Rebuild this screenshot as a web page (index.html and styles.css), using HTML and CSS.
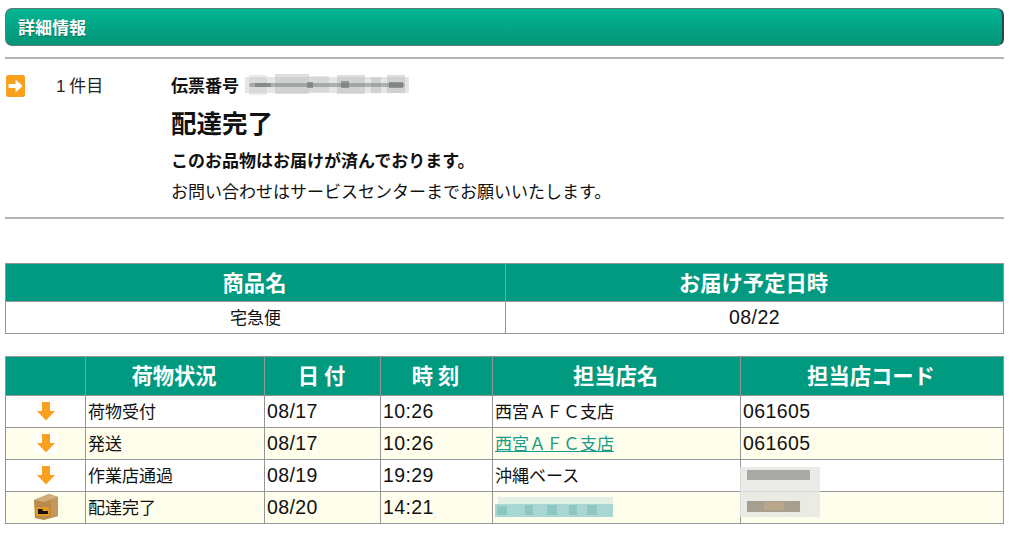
FILE: index.html
```html
<!DOCTYPE html>
<html lang="ja">
<head>
<meta charset="utf-8">
<title>詳細情報</title>
<link rel="stylesheet" href="styles.css">
</head>
<body>
<h1 class="bar">詳細情報</h1>
<hr class="rule rule-top">
<section class="summary">
  <svg class="go" width="19" height="22" viewBox="0 0 19 22"><rect width="19" height="22" rx="2.500" fill="#fa9f1e"/><path d="M2.500 9h7V4.500l7 6.500-7 6.500V13h-7z" fill="#fff"/></svg>
  <div class="count"><span class="one">1</span> 件目</div>
  <div class="detail">
    <div class="slip"><b>伝票番号</b>
      <svg class="mosaic" width="164" height="26" viewBox="0 0 164 26">
        <g fill="#bcbebc"><rect x="0" y="5" width="164" height="16" opacity=".4"/><rect x="4" y="3" width="18" height="20" opacity=".3"/><rect x="30" y="2" width="34" height="20" opacity=".5"/><rect x="64" y="4" width="20" height="16" opacity=".35"/><rect x="92" y="3" width="28" height="19" opacity=".5"/><rect x="126" y="5" width="10" height="16" opacity=".5"/><rect x="142" y="3" width="18" height="18" opacity=".5"/></g>
        <g fill="#6b7070"><rect x="4" y="11" width="156" height="4" rx="2" opacity=".45"/><rect x="10" y="11" width="16" height="4" opacity=".55"/><rect x="62" y="10" width="6" height="6" opacity=".6"/><rect x="96" y="9" width="8" height="7" opacity=".6"/><rect x="144" y="10" width="14" height="6" opacity=".6"/></g>
      </svg>
    </div>
    <h2 class="status">配達完了</h2>
    <p class="lead">このお品物はお届けが済んでおります。</p>
    <p class="note">お問い合わせはサービスセンターまでお願いいたします。</p>
  </div>
</section>
<hr class="rule rule-mid">

<table class="grid goods">
  <colgroup><col class="g1"><col></colgroup>
  <tr><th>商品名</th><th>お届け予定日時</th></tr>
  <tr class="row"><td class="c">宅急便</td><td class="c num">08/22</td></tr>
</table>

<div class="track-wrap">
<table class="grid track">
  <colgroup><col class="t1"><col class="t2"><col class="t3"><col class="t4"><col class="t5"><col></colgroup>
  <tr class="thead"><th></th><th>荷物状況</th><th>日 付</th><th>時 刻</th><th>担当店名</th><th>担当店コード</th></tr>
  <tr class="row"><td class="c"><svg class="down" width="18" height="20" viewBox="0 0 18 20"><path d="M5 1h8v9h5l-9 9.500-9-9.500h5z" fill="#fa9f1e"/></svg></td><td>荷物受付</td><td class="num">08/17</td><td class="num">10:26</td><td>西宮ＡＦＣ支店</td><td class="num">061605</td></tr>
  <tr class="row alt"><td class="c"><span class="chip"><svg class="down" width="18" height="20" viewBox="0 0 18 20"><path d="M5 1h8v9h5l-9 9.500-9-9.500h5z" fill="#fa9f1e"/></svg></span></td><td>発送</td><td class="num">08/17</td><td class="num">10:26</td><td><a href="#">西宮ＡＦＣ支店</a></td><td class="num">061605</td></tr>
  <tr class="row"><td class="c"><svg class="down" width="18" height="20" viewBox="0 0 18 20"><path d="M5 1h8v9h5l-9 9.500-9-9.500h5z" fill="#fa9f1e"/></svg></td><td>作業店通過</td><td class="num">08/19</td><td class="num">19:29</td><td>沖縄ベース</td><td></td></tr>
  <tr class="row alt"><td class="c"><svg class="box" width="24" height="26" viewBox="0 0 24 26"><path d="M0 6l15-6 9 3v19l-14 4-9-2z" fill="#b98a4c"/><path d="M15 0l9 3-14 5L0 6z" fill="#d2ad7c"/><path d="M17 6l7-3v19l-7 2z" fill="#c4975f"/><path d="M2 13h13v9H2z" fill="#e29a22"/><path d="M4 15h4l1 2h5v3H4z" fill="#1a1208"/></svg></td><td>配達完了</td><td class="num">08/20</td><td class="num">14:21</td><td></td><td></td></tr>
</table>
<svg class="patch patch-shop" width="124" height="24" viewBox="0 0 124 24">
  <rect x="3" y="1" width="115" height="20" fill="#cfe7e2" opacity=".6"/>
  <rect x="0" y="8" width="118" height="13" fill="#a9d8d4"/>
  <g fill="#8cc7c4"><rect x="2" y="10" width="10" height="9"/><rect x="30" y="9" width="8" height="10"/><rect x="52" y="9" width="10" height="10"/><rect x="74" y="9" width="8" height="10"/><rect x="92" y="9" width="10" height="10"/></g>
</svg>
<svg class="patch patch-code" width="80" height="50" viewBox="0 0 80 50">
  <rect width="80" height="50" fill="#e6e7e3" opacity=".85"/>
  <rect x="7" y="3" width="63" height="10" fill="#a9a9a8"/>
  <rect x="7" y="34" width="53" height="11" fill="#a69e8e"/>
  <rect x="24" y="35" width="20" height="8" fill="#b8a78a"/>
</svg>
</div>
</body>
</html>
```
FILE: styles.css
```css
html, body { margin: 0; padding: 0; }
body {
  background: #fff;
  color: #111;
  font-family: "Noto Sans CJK JP", "Liberation Sans", sans-serif;
  font-size: 17px;
  line-height: 1.3;
  height: 533px;
  overflow: hidden;
  padding: 8px 20px 0 5px;
  box-sizing: border-box;
}
.bar {
  margin: 0;
  height: 38px;
  box-sizing: border-box;
  padding-left: 12px;
  line-height: 36px;
  font-size: 17px;
  font-weight: 700;
  color: #fff;
  text-shadow: 0 1px 1px rgba(0, 60, 50, .5);
  border: 1px solid #5d7a75;
  border-right: 2px solid #2b4450;
  border-radius: 7px;
  background: linear-gradient(#00b594, #049577);
}
.rule {
  border: 0;
  height: 2px;
  background: #b4b4b4;
  margin: 0;
}
.rule-top { margin-top: 11px; }
.rule-mid { margin-top: 15px; }
.summary {
  display: flex;
  align-items: flex-start;
  height: 129px;
  padding-top: 14px;
}
.go { margin: 2px 0 0 1px; flex: none; }
.count { width: 115px; margin-left: 31px; line-height: 24px; flex: none; color: #222; }
.one { font-family: "Liberation Sans", sans-serif; }
.detail { flex: 1; }
.slip { display: flex; align-items: center; gap: 6px; height: 24px; font-weight: 700; }
.slip b { font-weight: 700; }
.status { margin: 8px 0 0; font-size: 25.5px; line-height: 34px; font-weight: 700; }
.lead { margin: 9px 0 0; font-weight: 700; line-height: 24px; }
.note { margin: 7px 0 0; line-height: 24px; }

.grid {
  width: 999px;
  border-collapse: collapse;
  table-layout: fixed;
}
.grid th, .grid td { border: 1px solid #969696; padding: 0 2px; }
.grid th {
  background: #009a80;
  color: #fff;
  font-size: 21.3px;
  font-weight: 700;
  text-align: center;
  line-height: 1;
  padding: 0 3px 2px 1px;
}
.goods { margin-top: 44px; }
.goods .g1 { width: 500px; }
.goods th { height: 35px; }
.track-wrap { position: relative; margin-top: 22px; }
.t1 { width: 80px; }
.t2 { width: 179px; }
.t3 { width: 116px; }
.t4 { width: 112px; }
.t5 { width: 248px; }
.track th { height: 36px; }
.grid .row td { height: 29px; line-height: 1; padding-bottom: 2px; }
.alt td {
  background-color: #fffdeb;
  background-image: radial-gradient(circle, #f6f4e2 1px, transparent 1px);
  background-size: 12px 10px;
}
.c { text-align: center; }
.grid .row td.num { font-family: "Liberation Sans", sans-serif; font-size: 19.5px; letter-spacing: .4px; padding-bottom: 0; }
a { color: #1a9c8c; }
.down, .box { display: block; margin: 0 auto; }
.chip { display: block; width: 24px; margin: 0 auto; background: #fff; }
.patch { position: absolute; }
.patch-shop { left: 490px; top: 140px; }
.patch-code { left: 735px; top: 111px; }
```
